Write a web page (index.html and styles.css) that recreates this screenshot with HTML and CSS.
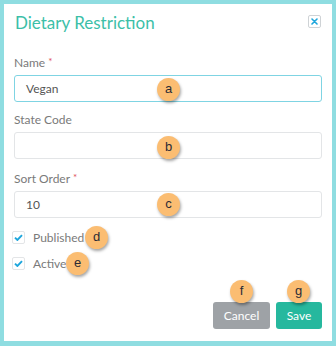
FILE: index.html
```html
<!DOCTYPE html>
<html>
<head>
<meta charset="utf-8">
<link rel="stylesheet" href="styles.css">
</head>
<body>
<div class="modal">
  <div class="header">
    <h1 class="title">Dietary Restriction</h1>
    <button class="close" aria-label="Close">
      <svg width="7" height="7" viewBox="0 0 7 7"><path d="M1 1L6 6M6 1L1 6" stroke="#1ea6dc" stroke-width="1.6" stroke-linecap="round"/></svg>
    </button>
  </div>
  <div class="form">
    <div class="field">
      <label class="label">Name <span class="req">*</span></label>
      <div class="input focused">Vegan</div>
    </div>
    <div class="field">
      <label class="label">State Code</label>
      <div class="input"></div>
    </div>
    <div class="field">
      <label class="label">Sort Order <span class="req">*</span></label>
      <div class="input">10</div>
    </div>
    <div class="checks">
      <div class="check"><span class="box"><svg width="9" height="7" viewBox="0 0 9 7"><path d="M1 3.6L3.4 6L8 1.2" fill="none" stroke="#1ea6dc" stroke-width="1.9"/></svg></span><span class="clabel">Published</span></div>
      <div class="check"><span class="box"><svg width="9" height="7" viewBox="0 0 9 7"><path d="M1 3.6L3.4 6L8 1.2" fill="none" stroke="#1ea6dc" stroke-width="1.9"/></svg></span><span class="clabel">Active</span></div>
    </div>
    <div class="actions">
      <button class="btn cancel">Cancel</button>
      <button class="btn save">Save</button>
    </div>
  </div>
</div>
<span class="badge b-a">a</span>
<span class="badge b-b">b</span>
<span class="badge b-c">c</span>
<span class="badge b-d">d</span>
<span class="badge b-e">e</span>
<span class="badge b-f">f</span>
<span class="badge b-g">g</span>
</body>
</html>
```
FILE: styles.css
```css
html, body {
  margin: 0;
  padding: 0;
}
body {
  width: 336px;
  height: 346px;
  background: #8fdde1;
  font-family: Lato, "Open Sans", sans-serif;
  position: relative;
  overflow: hidden;
}
.modal {
  position: absolute;
  left: 4px;
  top: 4px;
  width: 328px;
  height: 337px;
  background: #fff;
  box-sizing: border-box;
  padding: 0 10px 12px 10px;
  display: flex;
  flex-direction: column;
}
.header {
  display: flex;
  align-items: center;
  justify-content: space-between;
  height: 36px;
  padding-left: 1px;
}
.title {
  margin: 0;
  padding-top: 3px;
  font-size: 17px;
  font-weight: 400;
  color: #3cbfa8;
  line-height: 22px;
}
.close {
  width: 13px;
  height: 13px;
  padding: 0;
  border: 1px solid #cfd3d6;
  border-radius: 2px;
  background: #fff;
  display: flex;
  align-items: center;
  justify-content: center;
  margin-right: 1px;
}
.form {
  display: flex;
  flex-direction: column;
  margin-top: 15px;
}
.field {
  display: flex;
  flex-direction: column;
  gap: 4px;
  margin-bottom: 10px;
}
.label {
  font-size: 12px;
  line-height: 16px;
  color: #7a7a7a;
}
.req {
  color: #e0505a;
  font-size: 10px;
  vertical-align: 2px;
}
.input {
  height: 27px;
  box-sizing: border-box;
  border: 1px solid #e3e5e7;
  border-radius: 3px;
  padding: 0 11px;
  font-size: 12px;
  line-height: 25px;
  color: #555;
}
.input.focused {
  border-color: #7fd4e3;
}
.checks {
  display: flex;
  flex-direction: column;
  margin-left: -2px;
  margin-top: -4px;
}
.check {
  height: 26px;
  display: flex;
  align-items: center;
  gap: 8px;
}
.box {
  width: 13px;
  height: 13px;
  box-sizing: border-box;
  border: 1px solid #e3e5e7;
  border-radius: 2px;
  display: flex;
  align-items: center;
  justify-content: center;
}
.clabel {
  font-size: 12px;
  color: #7a7a7a;
}
.actions {
  display: flex;
  justify-content: flex-end;
  gap: 6px;
  margin-top: 26px;
}
.btn {
  height: 27px;
  border: none;
  border-radius: 3px;
  color: #fff;
  font-family: Lato, "Open Sans", sans-serif;
  font-size: 12px;
  padding: 0;
}
.cancel {
  width: 57px;
  background: #9ea2a6;
}
.save {
  width: 46px;
  background: #26b89e;
}
.badge {
  position: absolute;
  width: 23px;
  height: 23px;
  border-radius: 50%;
  background: #fbbd72;
  color: #2b2b35;
  font-family: "Liberation Sans", Arial, sans-serif;
  font-size: 13px;
  line-height: 22px;
  text-align: center;
  box-shadow: 1px 2px 3px rgba(0,0,0,0.35);
}
.b-a { left: 157px; top: 78px; }
.b-b { left: 157px; top: 136px; }
.b-c { left: 157px; top: 193px; }
.b-d { left: 85px; top: 226px; }
.b-e { left: 66px; top: 252px; }
.b-f { left: 230px; top: 280px; }
.b-g { left: 287px; top: 280px; }
```
